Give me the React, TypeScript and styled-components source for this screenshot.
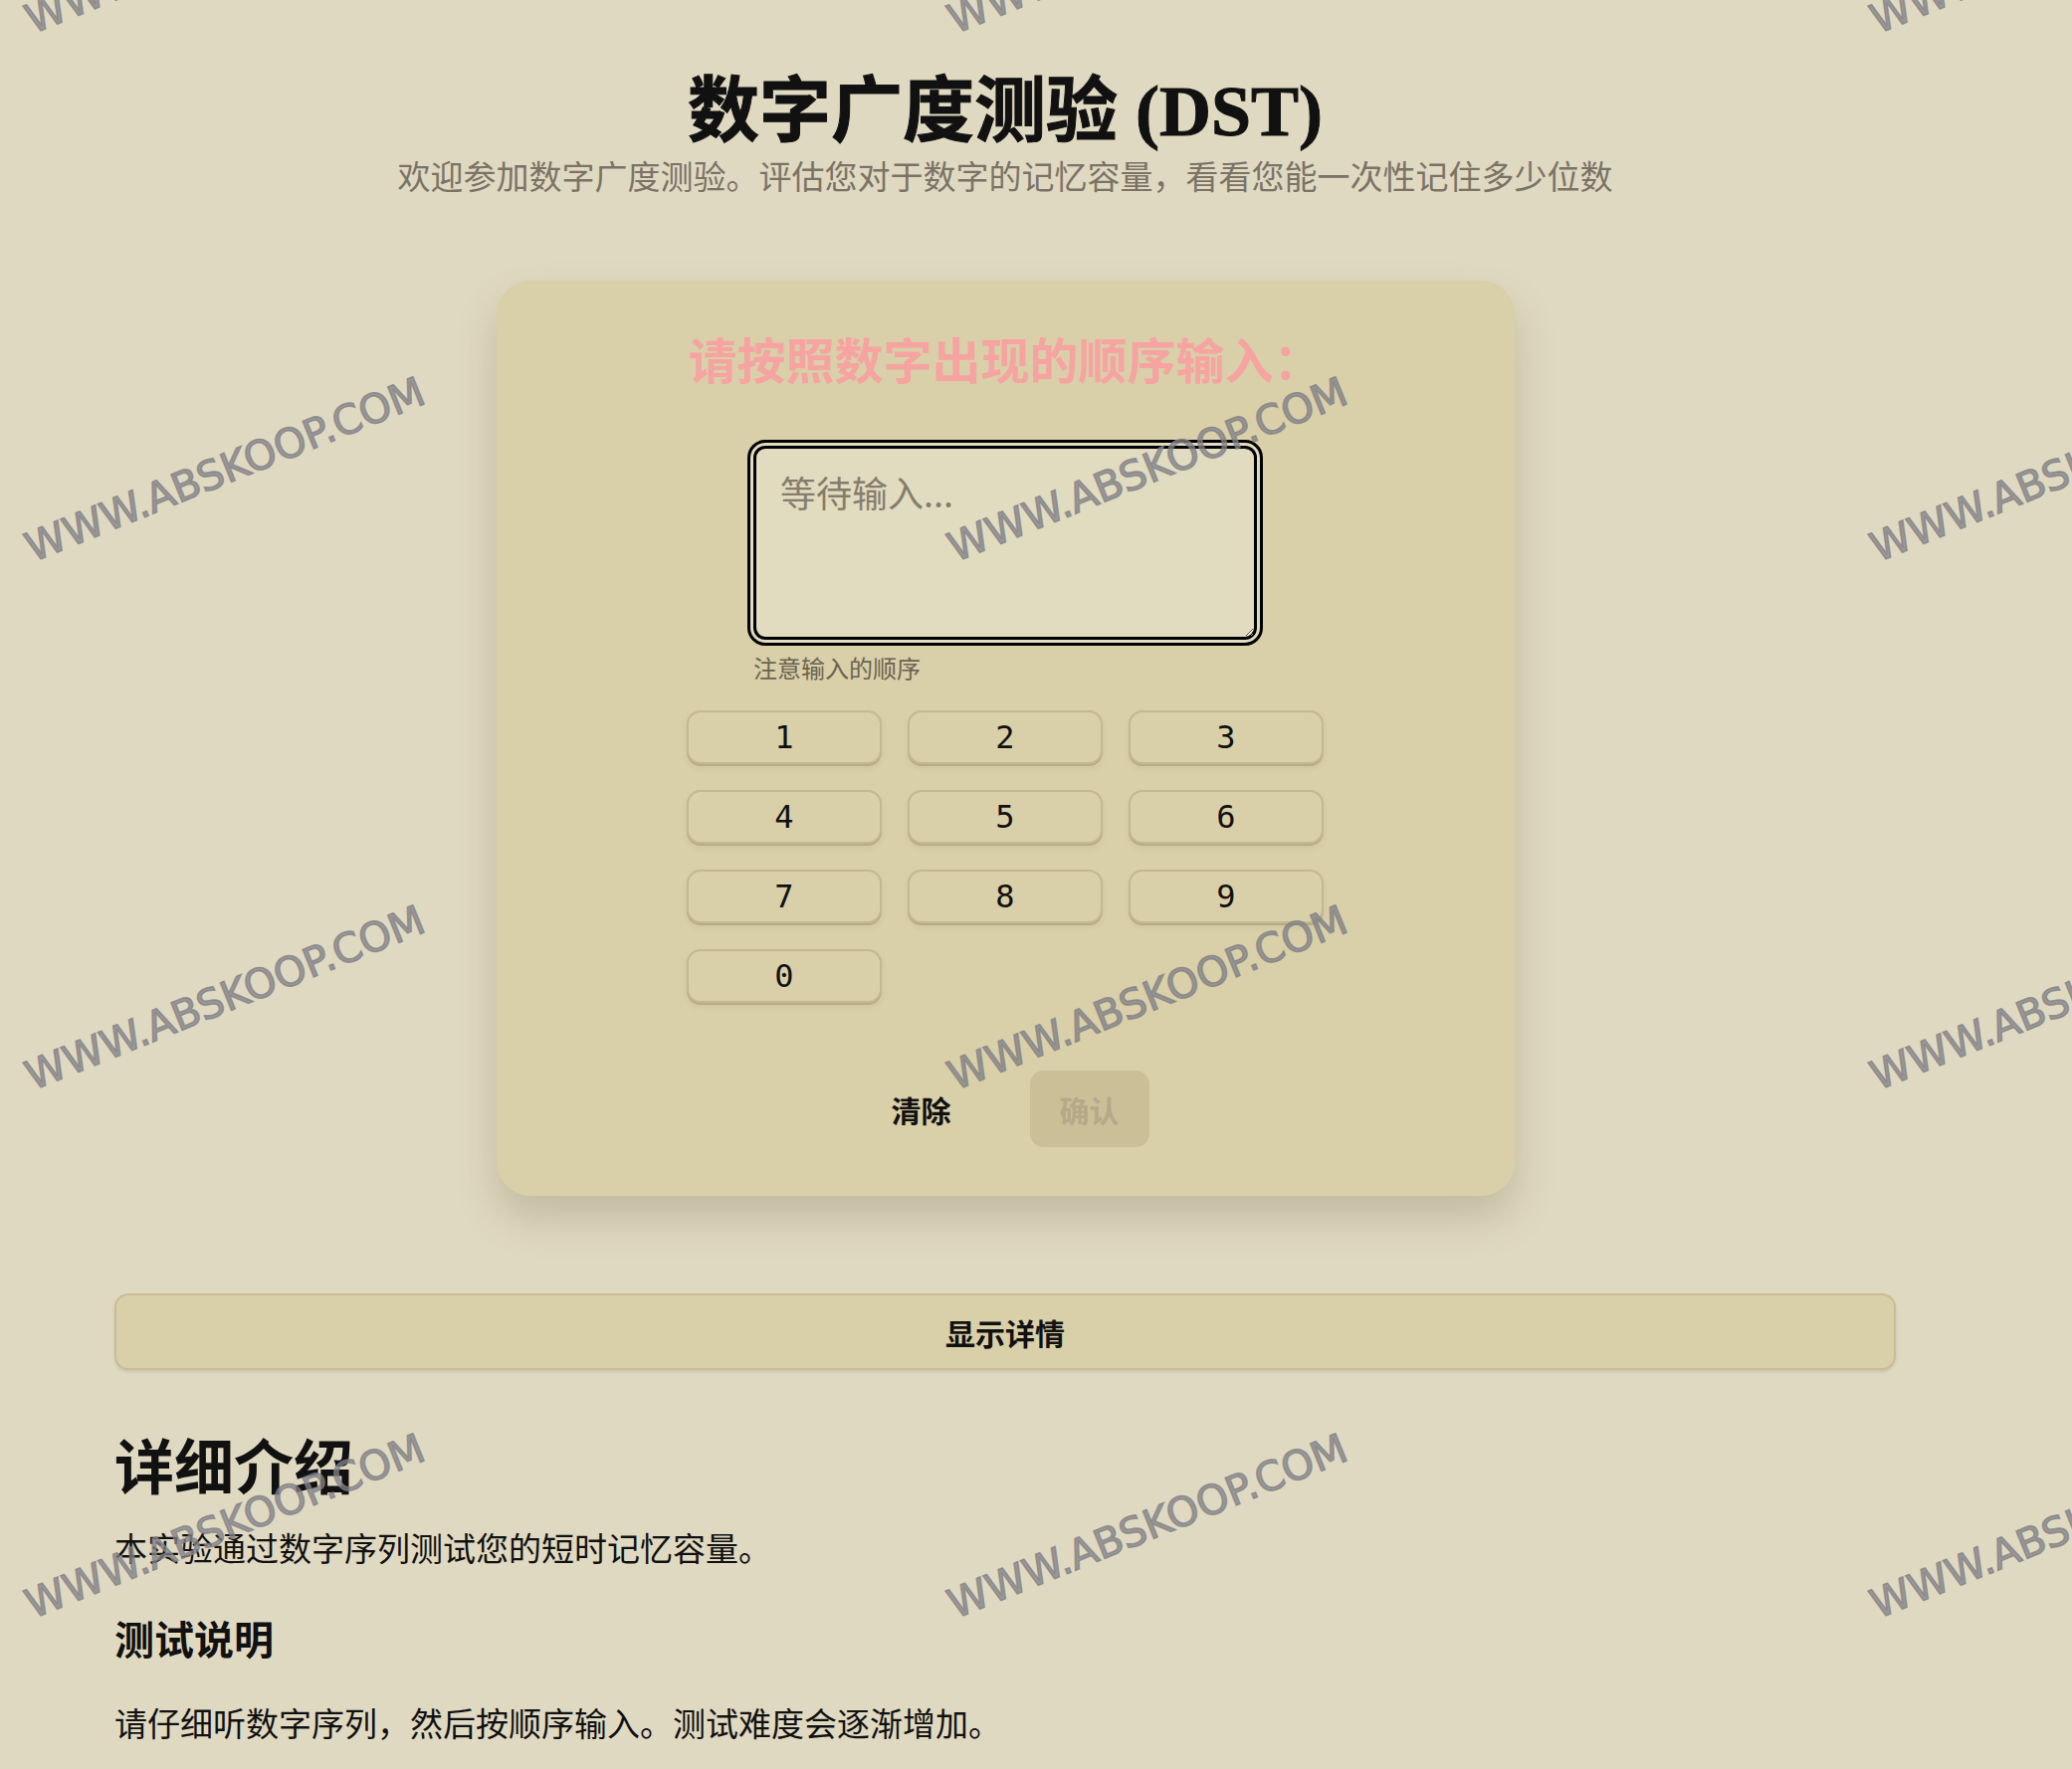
import React from "react";
import styled, { createGlobalStyle } from "styled-components";

const CJK = `"Noto Sans CJK SC", "Noto Sans", sans-serif`;

const GlobalStyle = createGlobalStyle`
  html, body {
    margin: 0;
    padding: 0;
    background: #e0d9c1;
    overflow: hidden;
  }
  body {
    font-family: ${CJK};
    color: #111;
  }
  * {
    box-sizing: border-box;
  }
`;

const KEYS = ["1", "2", "3", "4", "5", "6", "7", "8", "9", "0"];

const App = () => {
  return (
    <Screen>
      <GlobalStyle />
      <Main>
        <Header>
          <Title>数字广度测验 (DST)</Title>
          <Subtitle>欢迎参加数字广度测验。评估您对于数字的记忆容量，看看您能一次性记住多少位数</Subtitle>
        </Header>

        <Card>
          <Prompt>请按照数字出现的顺序输入：</Prompt>
          <InputBlock>
            <AnswerBox placeholder="等待输入..." />
            <Hint>注意输入的顺序</Hint>
          </InputBlock>
          <Keypad>
            {KEYS.map((k) => (
              <Key key={k}>{k}</Key>
            ))}
          </Keypad>
          <Actions>
            <ActionButton>清除</ActionButton>
            <ActionButton $disabled disabled>确认</ActionButton>
          </Actions>
        </Card>

        <DetailsToggle>显示详情</DetailsToggle>

        <Intro>
          <IntroTitle>详细介绍</IntroTitle>
          <IntroText>本实验通过数字序列测试您的短时记忆容量。</IntroText>
          <IntroSubtitle>测试说明</IntroSubtitle>
          <IntroText $gap={37}>请仔细听数字序列，然后按顺序输入。测试难度会逐渐增加。</IntroText>
        </Intro>
      </Main>

      <Watermarks>
        {Array.from({ length: 12 }).map((_, i) => (
          <Mark key={i}>WWW.ABSKOOP.COM</Mark>
        ))}
      </Watermarks>
    </Screen>
  );
};

export default App;

const Screen = styled.div`
  position: relative;
  width: 100%;
  height: 100vh;
  overflow: hidden;
  background: #e0d9c1;
`;

const Main = styled.main`
  width: 2020px;
  padding: 71px 115px 0;
  display: flex;
  flex-direction: column;
  align-items: center;
`;

const Header = styled.header`
  display: flex;
  flex-direction: column;
  align-items: center;
`;

const Title = styled.h1`
  margin: 0;
  font-family: "Liberation Serif", ${CJK};
  font-size: 72px;
  line-height: 83px;
  font-weight: 700;
  color: #111;
  -webkit-text-stroke: 1px #111;
`;

const Subtitle = styled.p`
  margin: 0;
  font-size: 33px;
  line-height: 45px;
  color: #7a7366;
`;

const Card = styled.section`
  margin-top: 83px;
  width: 1023px;
  padding: 48px 0 49px;
  display: flex;
  flex-direction: column;
  align-items: center;
  background: #d9cfa8;
  border-radius: 34px;
  box-shadow: 0 22px 40px rgba(90, 78, 40, 0.22);
`;

const Prompt = styled.h2`
  margin: 0;
  font-size: 49px;
  line-height: 60px;
  font-weight: 700;
  color: #f6a3a1;
`;

const InputBlock = styled.div`
  margin-top: 52px;
  width: 518px;
  display: flex;
  flex-direction: column;
`;

const AnswerBox = styled.textarea`
  width: 518px;
  height: 207px;
  padding: 21px 24px;
  border: 9px double #000;
  border-radius: 18px;
  background: #e1dbc0;
  font-family: ${CJK};
  font-size: 36px;
  line-height: 45px;
  color: #222;
  outline: none;

  &::placeholder {
    color: #857d6c;
  }
`;

const Hint = styled.span`
  margin-top: 6px;
  padding-left: 6px;
  font-size: 24px;
  line-height: 32px;
  color: #6b6352;
`;

const Keypad = styled.div`
  margin-top: 27px;
  display: grid;
  grid-template-columns: repeat(3, 196px);
  grid-auto-rows: 54px;
  gap: 26px;
`;

const Key = styled.button`
  font-family: "DejaVu Sans Mono", monospace;
  font-size: 32px;
  color: #111;
  background: #d9cfa8;
  border: 2px solid #c4b890;
  border-radius: 14px;
  box-shadow: 0 2px 0 #b9ab82, 0 4px 6px rgba(90, 78, 40, 0.08);
  cursor: pointer;
`;

const Actions = styled.div`
  margin-top: 68px;
  display: flex;
  gap: 49px;
`;

const ActionButton = styled.button<{ $disabled?: boolean }>`
  width: 120px;
  height: 77px;
  border: none;
  border-radius: 14px;
  font-family: ${CJK};
  font-size: 30px;
  font-weight: 700;
  background: ${(p) => (p.$disabled ? "#cbbf98" : "transparent")};
  color: ${(p) => (p.$disabled ? "#b4a988" : "#111")};
  cursor: ${(p) => (p.$disabled ? "default" : "pointer")};
`;

const DetailsToggle = styled.button`
  margin-top: 98px;
  width: 100%;
  height: 77px;
  background: #d9cfa8;
  border: 2px solid #cabd95;
  border-radius: 14px;
  box-shadow: 0 2px 3px rgba(90, 78, 40, 0.15);
  font-family: ${CJK};
  font-size: 30px;
  font-weight: 700;
  color: #111;
  cursor: pointer;
`;

const Intro = styled.article`
  width: 100%;
  margin-top: 58px;
  display: flex;
  flex-direction: column;
`;

const IntroTitle = styled.h2`
  margin: 0;
  font-size: 60px;
  line-height: 72px;
  font-weight: 700;
`;

const IntroSubtitle = styled.h3`
  margin: 42px 0 0;
  font-size: 40px;
  line-height: 52px;
  font-weight: 700;
`;

const IntroText = styled.p<{ $gap?: number }>`
  margin: ${(p) => p.$gap ?? 26}px 0 0;
  font-size: 33px;
  line-height: 45px;
`;

const Watermarks = styled.div`
  position: absolute;
  top: -325px;
  left: -237px;
  display: grid;
  grid-template-columns: repeat(3, 927px);
  grid-auto-rows: 531px;
  place-items: center;
  pointer-events: none;
  z-index: 10;
`;

const Mark = styled.span`
  transform: rotate(-22deg);
  font-family: "DejaVu Sans", sans-serif;
  font-size: 41px;
  white-space: nowrap;
  color: rgba(128, 128, 134, 0.75);
  -webkit-text-stroke: 1.4px rgba(128, 128, 134, 0.75);
`;
